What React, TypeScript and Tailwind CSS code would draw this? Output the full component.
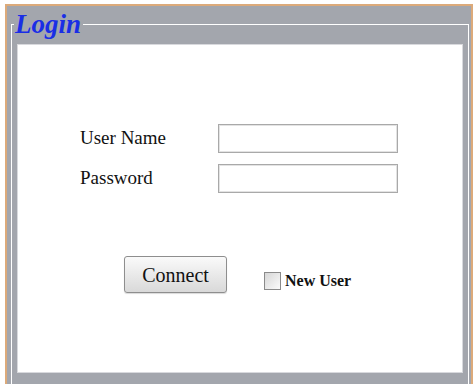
import { useState } from 'react';

export default function App() {
  const [user, setUser] = useState('');
  const [pass, setPass] = useState('');
  const [newUser, setNewUser] = useState(false);

  return (
    <div className="w-[474px] h-[392px] bg-white pt-[4px] pl-[5px] font-['Liberation_Serif','Times_New_Roman',serif]">
      <div className="w-[468px] h-[380px] bg-[#a3a6ad] border-t-2 border-l-2 border-r-2 border-[#dcaa7a] pl-[4px] pr-[2px] pt-[3px]">
        <fieldset className="border border-b-0 border-white h-[375px] pl-[5px] pr-[5px] pt-[5px]">
          <legend className="-ml-[3px] pl-[1px] pr-[2px] text-[27px] leading-[30px] font-bold italic text-[#1a2ee6]">Login</legend>
          <div className="bg-white h-[329px] border border-[#d8d9dd] pt-[79px] pl-[62px]">
            <div className="grid grid-cols-[138px_180px] gap-y-[11px] items-center">
              <label className="text-[19px] text-[#111]">User Name</label>
              <input
                value={user}
                onChange={e => setUser(e.target.value)}
                className="h-[29px] border border-[#a9a9a9] shadow-[inset_0_0_0_1px_#e3e3e3] bg-white outline-none px-1"
              />
              <label className="text-[19px] text-[#111]">Password</label>
              <input
                type="password"
                value={pass}
                onChange={e => setPass(e.target.value)}
                className="h-[29px] border border-[#a9a9a9] shadow-[inset_0_0_0_1px_#e3e3e3] bg-white outline-none px-1"
              />
            </div>
            <div className="flex items-end mt-[63px] pl-[44px]">
              <button className="w-[103px] h-[37px] rounded-[3px] border border-[#8e8e8e] bg-linear-to-b from-[#fafafa] to-[#d9d9d9] text-[20px] text-[#111] shadow-[0_1px_1px_rgba(0,0,0,0.15)]">
                Connect
              </button>
              <label className="flex items-center gap-[4px] ml-[37px]">
                <input
                  type="checkbox"
                  checked={newUser}
                  onChange={e => setNewUser(e.target.checked)}
                  className="appearance-none w-[17px] h-[18px] border border-[#8a8a8a] bg-linear-to-br from-[#d6d6d6] to-[#fbfbfb]"
                />
                <span className="text-[16px] font-bold text-[#111]">New User</span>
              </label>
            </div>
          </div>
        </fieldset>
      </div>
    </div>
  );
}
